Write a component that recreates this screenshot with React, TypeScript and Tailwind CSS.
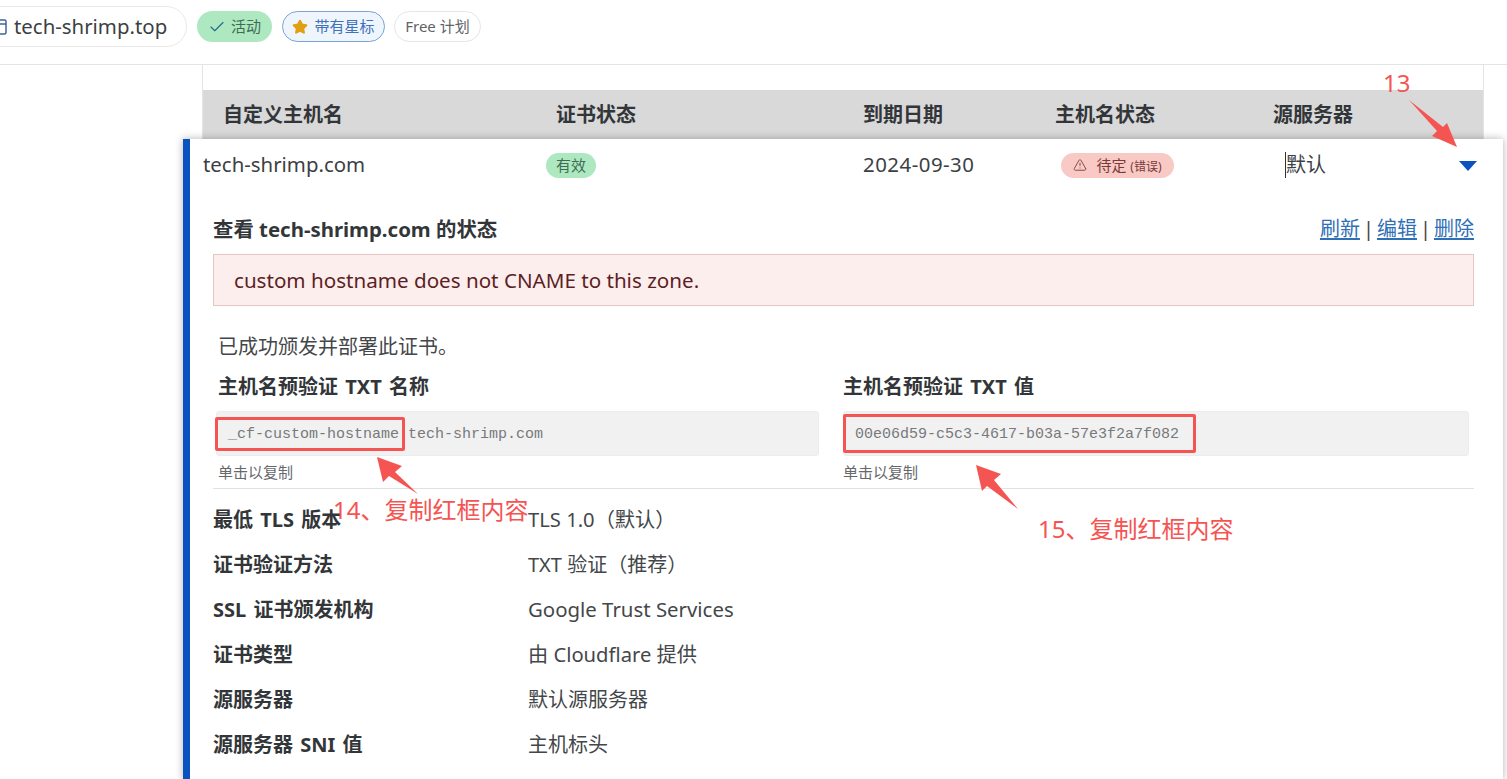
import { Check, Star, TriangleAlert } from 'lucide-react'

const details = [
  { label: '最低 TLS 版本', value: 'TLS 1.0（默认）', size: 'text-[20.2px]' },
  { label: '证书验证方法', value: 'TXT 验证（推荐）', size: 'text-[20px]' },
  { label: 'SSL 证书颁发机构', value: 'Google Trust Services', size: 'text-[20.4px]' },
  { label: '证书类型', value: '由 Cloudflare 提供', size: 'text-[20.2px]' },
  { label: '源服务器', value: '默认源服务器', size: 'text-[20px]' },
  { label: '源服务器 SNI 值', value: '主机标头', size: 'text-[20px]' },
]

const columns = ['自定义主机名', '证书状态', '到期日期', '主机名状态', '源服务器']

function Header() {
  return (
    <header className="flex h-[65px] items-start border-b border-[#e4e4e4] pt-[6px]">
      <div className="ml-[-20px] flex h-[41px] w-[207px] items-center rounded-full border border-[#e9e9e9] pl-[18px]">
        <svg width="9" height="16" viewBox="0 0 9 16" fill="none" className="mr-[6px]">
          <rect x="-6" y="1" width="13" height="14" rx="1.5" stroke="#3f6598" strokeWidth="1.5" />
          <path d="M-6 5h13" stroke="#3f6598" strokeWidth="1.5" />
        </svg>
        <span className="text-[20.4px] leading-none text-[#3c3f44]">tech-shrimp.top</span>
      </div>
      <div className="mt-[5px] ml-[10px] flex h-[31px] w-[75px] items-center justify-center gap-[5px] rounded-full bg-[#aee8c0] text-[15px] text-[#3e6d52]">
        <Check size={18} strokeWidth={1.5} className="text-[#256a8a]" />
        <span>活动</span>
      </div>
      <div className="mt-[5px] ml-[10px] flex h-[31px] w-[103px] items-center justify-center gap-[6px] rounded-full border border-[#7aa3d6] bg-[#eff5fc] text-[15px] text-[#3f72b8]">
        <Star size={16} fill="#e0a010" stroke="#e0a010" />
        <span>带有星标</span>
      </div>
      <div className="mt-[5px] ml-[9px] flex h-[31px] w-[87px] items-center justify-center rounded-full border border-[#e6e6e6] text-[15px] text-[#5f6368]">
        Free 计划
      </div>
    </header>
  )
}

function CopyField({ text, note, width }: { text: string; note: string; width: string }) {
  return (
    <div className={width}>
      <div className="flex h-[45px] items-center rounded-[3px] border border-[#ececec] bg-[#f1f1f1] pt-[3px] pl-[11px] font-['Liberation_Mono',monospace] text-[15px] text-[#77797c]">
        {text}
      </div>
      <div className="mt-[7px] text-[15px] leading-[18px] text-[#66686b]">{note}</div>
    </div>
  )
}

function ExpandedRow() {
  return (
    <section className="ml-[-20px] h-[641px] w-[1320px] border-l-[7px] border-[#0a52bf] bg-white shadow-[0_0_8px_rgba(0,0,0,0.3)]">
      <div className="relative flex h-[52px] items-center text-[20.4px] text-[#3c3f44]">
        <span className="mb-[2px] ml-[13px] w-[343px]">tech-shrimp.com</span>
        <span className="flex h-[25px] w-[50px] items-center justify-center rounded-full bg-[#aee8c0] text-[15px] text-[#3e6d52]">
          有效
        </span>
        <span className="mb-[2px] ml-[267px] w-[198px] tracking-[0.5px]">2024-09-30</span>
        <span className="flex h-[25px] w-[113px] items-center justify-center gap-[9px] rounded-full bg-[#f8c9c5] text-[15px] text-[#7a3b37]">
          <TriangleAlert size={14} strokeWidth={1.5} />
          <span>
            待定 <span className="text-[12px]">(错误)</span>
          </span>
        </span>
        <span className="ml-[111px] border-l border-[#333] text-[20px] leading-[26px]">默认</span>
        <svg width="18" height="10" viewBox="0 0 18 10" className="absolute top-[22px] right-[26px]">
          <path d="M0 0h18L9 10z" fill="#0a52bf" />
        </svg>
      </div>

      <div className="mr-[29px] ml-[23px] pt-[24px]">
        <div className="flex h-[28px] items-center justify-between">
          <h3 className="text-[20.4px] font-bold text-[#333639]">查看 tech-shrimp.com 的状态</h3>
          <div className="flex gap-[3px] text-[20px] text-[#444]">
            <a className="text-[#2f6fb5] underline underline-offset-2">刷新</a>
            <span>|</span>
            <a className="text-[#2f6fb5] underline underline-offset-2">编辑</a>
            <span>|</span>
            <a className="text-[#2f6fb5] underline underline-offset-2">删除</a>
          </div>
        </div>
        <div className="mt-[11px] flex h-[52px] items-center border border-[#e6c5c5] bg-[#fdeeee] pl-[20px] text-[20.6px] text-[#5c1f24]">
          custom hostname does not CNAME to this zone.
        </div>

        <p className="mt-[27px] ml-[5px] text-[20px] leading-[28px] text-[#44474a]">已成功颁发并部署此证书。</p>
        <div className="mt-[12px] ml-[5px] flex text-[20px] leading-[28px] font-bold text-[#333639] [word-spacing:2px]">
          <h4 className="w-[625px]">主机名预验证 TXT 名称</h4>
          <h4>主机名预验证 TXT 值</h4>
        </div>
        <div className="mt-[10px] ml-[3px] flex gap-[24px]">
          <CopyField text="_cf-custom-hostname.tech-shrimp.com" note="单击以复制" width="w-[603px] [&>div:last-child]:ml-[2px]" />
          <CopyField text="00e06d59-c5c3-4617-b03a-57e3f2a7f082" note="单击以复制" width="w-[626px]" />
        </div>
        <div className="mt-[7px] border-t border-[#e2e2e2]" />

        <div className="mt-[8px] flex flex-col">
          {details.map((row) => (
            <div key={row.label} className="flex h-[45px] items-center">
              <span className="w-[315px] text-[20px] font-bold text-[#333639] [word-spacing:2px]">{row.label}</span>
              <span className={`${row.size} text-[#44474a]`}>{row.value}</span>
            </div>
          ))}
        </div>
      </div>
    </section>
  )
}

function Annotations() {
  return (
    <div className="pointer-events-none absolute inset-0 font-['Noto_Sans','Noto_Sans_CJK_SC',sans-serif] text-[#f55552]">
      <span className="absolute top-[67px] left-[1383px] text-[24px] leading-[32px]">13</span>
      <span className="absolute top-[494px] left-[333px] text-[24px] leading-[32px]">14、复制红框内容</span>
      <span className="absolute top-[513px] left-[1038px] text-[24px] leading-[32px]">15、复制红框内容</span>

      <div className="absolute top-[417px] left-[215px] h-[34px] w-[190px] rounded-[2px] border-[3px] border-[#f55552]" />
      <div className="absolute top-[414px] left-[843px] h-[39px] w-[353px] rounded-[2px] border-[3px] border-[#f55552]" />

      <svg width="1507" height="779" className="absolute inset-0">
        <path d="M1409 100 L1443 127 L1447 123 L1457 147 L1432 136 L1437 131 Z" fill="#f55552" />
        <path d="M377 457 L402 466 L395 472 L418 494 L389 476 L383 482 Z" fill="#f55552" />
        <path d="M976 465 L1001 474 L994 480 L1018 509 L987 486 L982 491 Z" fill="#f55552" />
      </svg>
    </div>
  )
}

export default function App() {
  return (
    <div className="relative h-[779px] w-[1507px] overflow-hidden bg-white font-['Noto_Sans','Noto_Sans_CJK_SC',sans-serif]">
      <Header />
      <main className="ml-[202px] h-[714px] w-[1282px] border-x border-[#e4e4e4] pt-[25px]">
        <div className="grid h-[49px] grid-cols-[333px_307px_192px_218px_1fr] items-center bg-[#d9d9d9] pl-[20px] text-[20px] font-bold text-[#333639]">
          {columns.map((col) => (
            <span key={col}>{col}</span>
          ))}
        </div>
        <ExpandedRow />
      </main>
      <Annotations />
    </div>
  )
}
